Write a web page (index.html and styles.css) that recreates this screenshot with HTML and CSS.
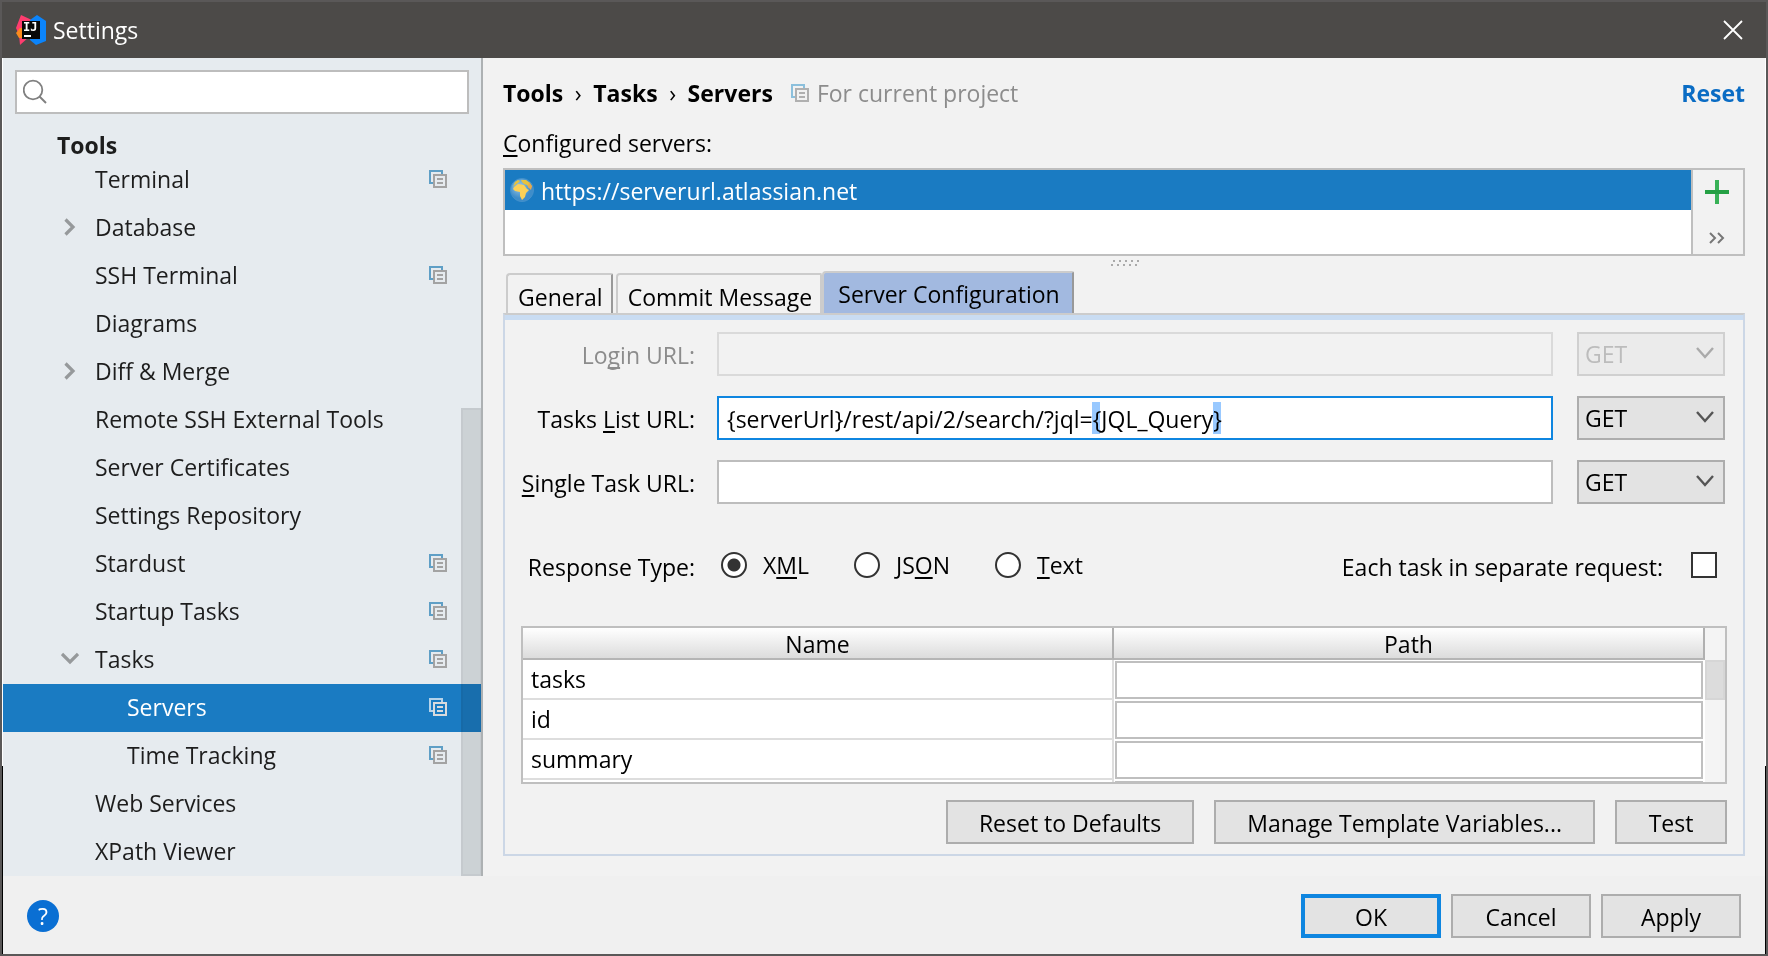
FILE: index.html
```html
<!DOCTYPE html>
<html lang="en">
<head>
<meta charset="utf-8">
<title>Settings</title>
<link rel="stylesheet" href="styles.css">
</head>
<body>
<svg class="defs" aria-hidden="true">
  <symbol id="project" viewBox="0 0 18 18">
    <path class="back" d="M13 4V1H1v12h3" fill="none" stroke-width="2"/>
    <path class="front" d="M5 5h12v12H5zM8 9h6M8 13h6" fill="none" stroke-width="2"/>
  </symbol>
  <symbol id="right" viewBox="0 0 18 18">
    <path d="M4.500 1.500L12 9L4.500 16.500" fill="none" stroke="#96999b" stroke-width="3.200"/>
  </symbol>
  <symbol id="down" viewBox="0 0 18 18">
    <path d="M1 4L9 12L17 4" fill="none" stroke="#96999b" stroke-width="3.200"/>
  </symbol>
  <symbol id="caret" viewBox="0 0 18 14">
    <path d="M1 2L9 11L17 2" fill="none" stroke="currentColor" stroke-width="2.400"/>
  </symbol>
</svg>
<div class="window">
  <header class="titlebar">
    <svg class="logo" viewBox="0 0 30 30" aria-hidden="true">
      <path d="M5 0L18 6L13 22L4 30L3 20L0 13z" fill="#fe3d6f"/>
      <path d="M0 18L4 13H7V23H3z" fill="#fb8b1e"/>
      <path d="M14 5L21 0L30 6V26L20 30L14 25z" fill="#0b84fb"/>
      <path d="M6 6h18v18H6z" fill="#080808"/>
      <text x="7" y="16" class="logo-text">IJ</text>
      <path d="M8 20h7v2H8z" fill="#fff"/>
    </svg>
    <h1>Settings</h1>
    <button class="close" aria-label="Close"><svg viewBox="0 0 20 20"><path d="M1 1L19 19M19 1L1 19" stroke="#fff" stroke-width="1.800"/></svg></button>
  </header>

  <div class="content">
    <aside class="sidebar">
      <label class="search">
        <svg viewBox="0 0 26 26" aria-hidden="true"><circle cx="10" cy="11" r="9.300" fill="none" stroke="#808080" stroke-width="1.800"/><path d="M16.500 17.500L23 24" stroke="#808080" stroke-width="2"/></svg>
        <input type="text" aria-label="Search settings">
      </label>
      <h2>Tools</h2>
      <nav class="tree">
        <a href="#">Terminal<svg class="scope"><use href="#project"/></svg></a>
        <a href="#"><svg class="arrow"><use href="#right"/></svg>Database</a>
        <a href="#">SSH Terminal<svg class="scope"><use href="#project"/></svg></a>
        <a href="#">Diagrams</a>
        <a href="#"><svg class="arrow"><use href="#right"/></svg>Diff &amp; Merge</a>
        <a href="#">Remote SSH External Tools</a>
        <a href="#">Server Certificates</a>
        <a href="#">Settings Repository</a>
        <a href="#">Stardust<svg class="scope"><use href="#project"/></svg></a>
        <a href="#">Startup Tasks<svg class="scope"><use href="#project"/></svg></a>
        <a href="#"><svg class="arrow"><use href="#down"/></svg>Tasks<svg class="scope"><use href="#project"/></svg></a>
        <a href="#" class="child selected">Servers<svg class="scope"><use href="#project"/></svg></a>
        <a href="#" class="child">Time Tracking<svg class="scope"><use href="#project"/></svg></a>
        <a href="#">Web Services</a>
        <a href="#">XPath Viewer</a>
        <span class="tree-thumb"></span>
      </nav>
    </aside>

    <main>
      <div class="crumbs">
        <b>Tools</b><span>›</span><b>Tasks</b><span>›</span><b>Servers</b>
        <svg class="scope"><use href="#project"/></svg>
        <em>For current project</em>
        <a href="#">Reset</a>
      </div>
      <p class="caption"><u>C</u>onfigured servers:</p>
      <div class="servers">
        <ul>
          <li>
            <svg viewBox="0 0 24 24" aria-hidden="true">
              <defs><radialGradient id="sea" cx=".4" cy=".35"><stop offset="0" stop-color="#9fcbe6"/><stop offset="1" stop-color="#3f8dc9"/></radialGradient></defs>
              <circle cx="12" cy="12" r="11.500" fill="url(#sea)" stroke="#4391cb"/>
              <path d="M5 4L8 2L10 3L8 5L5 7L3 9zM11 2L16 2L20 5L22 9L19 10L17 7L14 6L12 4z" fill="#e9c33c"/>
              <path d="M4 9L8 6L14 7L17 11L19 12L16 15L15 19L12 22L10 18L10 14L5 13L3 11z" fill="#fdd156"/>
              <path d="M19 4L22 8L21 12L18 9z" fill="#e8a94e"/>
            </svg>
            <span>https://serverurl.atlassian.net</span>
          </li>
        </ul>
        <div class="tools">
          <button aria-label="Add"><svg width="24" height="24" viewBox="0 0 24 24"><path d="M12 0V24" stroke="#38b157" stroke-width="4"/><path d="M0 12H24" stroke="#24a044" stroke-width="4"/></svg></button>
          <button aria-label="More"><svg width="16" height="12" viewBox="0 0 16 12"><path d="M1 1L6 6L1 11M9 1L14 6L9 11" fill="none" stroke="#777" stroke-width="2"/></svg></button>
        </div>
      </div>
      <div class="grip"><svg viewBox="0 0 30 8" aria-hidden="true"><path d="M4 1h26M2 5h26" stroke="#aaa" stroke-width="2" stroke-dasharray="2 4"/></svg></div>
      <div class="tabs" role="tablist">
        <button role="tab" class="tab-general">General</button>
        <button role="tab">Commit Message</button>
        <button role="tab" class="active" aria-selected="true">Server Configuration</button>
      </div>
      <section class="panel">
        <div class="form">
          <label class="off" for="login">Lo<u>g</u>in URL:</label>
          <input id="login" type="text" disabled>
          <div class="combo off"><select aria-label="Login method" disabled><option>GET</option></select><svg><use href="#caret"/></svg></div>
          <label for="list">Tasks <u>L</u>ist URL:</label>
          <input id="list" class="focused" type="text" value="{serverUrl}/rest/api/2/search/?jql={JQL_Query}">
          <div class="combo"><select aria-label="Tasks list method"><option>GET</option></select><svg><use href="#caret"/></svg></div>
          <label for="single"><u>S</u>ingle Task URL:</label>
          <input id="single" type="text">
          <div class="combo"><select aria-label="Single task method"><option>GET</option></select><svg><use href="#caret"/></svg></div>
        </div>
        <div class="response">
          <span class="response-label">Response Type:</span>
          <label><input type="radio" name="type" checked><span>X<u>M</u>L</span></label>
          <label><input type="radio" name="type"><span>JS<u>O</u>N</span></label>
          <label><input type="radio" name="type"><span><u>T</u>ext</span></label>
          <label class="separate"><span>Each task in separate request:</span><input type="checkbox"></label>
        </div>
        <div class="grid">
          <table>
            <thead><tr><th>Name</th><th>Path</th></tr></thead>
            <tbody>
              <tr><td>tasks</td><td><input type="text" aria-label="tasks path"></td></tr>
              <tr><td>id</td><td><input type="text" aria-label="id path"></td></tr>
              <tr><td>summary</td><td><input type="text" aria-label="summary path"></td></tr>
              <tr><td></td><td><input type="text" aria-label="path"></td></tr>
            </tbody>
          </table>
          <div class="track"><span></span></div>
        </div>
        <div class="actions">
          <button class="btn">Reset to Defaults</button>
          <button class="btn">Manage Template Variables...</button>
          <button class="btn test">Test</button>
        </div>
      </section>
    </main>
  </div>

  <footer>
    <button class="help" aria-label="Help">?</button>
    <button class="btn primary">OK</button>
    <button class="btn">Cancel</button>
    <button class="btn">Apply</button>
  </footer>
</div>
</body>
</html>
```
FILE: styles.css
```css
* { box-sizing: border-box; }
body {
  margin: 0;
  font: 23px/32px "Open Sans", "Noto Sans", sans-serif;
  color: #000;
}
button, input, select { font: inherit; color: inherit; margin: 0; border-radius: 0; }
button { padding: 0; border: 0; background: none; }
h1, h2, p, ul { margin: 0; padding: 0; font: inherit; list-style: none; }
a { color: inherit; text-decoration: none; }
u { text-decoration-thickness: 2px; text-underline-offset: 3px; text-decoration-skip-ink: none; }
svg { flex: none; display: block; }
.defs { position: absolute; width: 0; height: 0; }

.window {
  position: relative;
  display: flex;
  flex-direction: column;
  height: 100vh;
  min-height: 900px;
  border: 2px solid #5a5858;
  background: #f0f0f0;
}
/* inner edge: white above, black along the lower part of the frame */
.window::after {
  content: "";
  position: absolute;
  inset: 56px 0 0;
  border: solid;
  border-width: 0 1px;
  border-image: linear-gradient(#fff 79%, #000 79%) 1;
  pointer-events: none;
}
.titlebar {
  display: flex;
  align-items: center;
  height: 56px;
  padding: 0 23px 0 14px;
  background: #4c4a48;
  color: #fff;
}
.titlebar h1 { flex: 1; margin-left: 7px; }
.logo { width: 30px; height: 30px; }
.logo-text { font: bold 12px "DejaVu Sans Mono", monospace; fill: #fff; }
.close svg { width: 20px; height: 20px; }

.content { display: flex; flex: 1; min-height: 0; padding-left: 1px; }
.sidebar {
  display: flex;
  flex-direction: column;
  width: 480px;
  flex: none;
  border-right: 2px solid #adb1b3;
  background: #e6ebef;
  color: #1d1d1d;
}
.search {
  display: flex;
  align-items: center;
  height: 44px;
  margin: 12px 12px 0;
  padding: 0 6px;
  flex: none;
  border: 2px solid #bdbdbd;
  background: #fff;
}
.search svg { width: 26px; height: 26px; }
.search input { flex: 1; min-width: 0; border: 0; outline: 0; background: none; }
.sidebar h2 { margin: 15px 0 -5px 54px; font-weight: bold; }
.tree { position: relative; flex: 1; min-height: 0; overflow: hidden; }
.tree a { display: flex; align-items: center; height: 48px; padding: 0 34px 2px 92px; }
.tree a.child { padding-left: 124px; }
.tree .scope { margin-left: auto; }
.scope { --back: #5f9fc6; --front: #a3a3a3; width: 18px; height: 18px; }
.back { stroke: var(--back); }
.front { stroke: var(--front); }
.arrow { width: 18px; height: 18px; margin: 0 16px 0 -34px; }
.tree .selected { background: #1a7bc2; color: #fff; }
.selected .scope { --back: #b5d3ea; --front: #d8dadd; }
.tree-thumb {
  position: absolute;
  top: 35%;
  right: 0;
  bottom: 0;
  width: 20px;
  border: 2px solid #dbdcdc;
  border-right-width: 1px;
  background: #e3e4e4;
  mix-blend-mode: multiply;
}

main { display: flex; flex-direction: column; flex: 1; min-width: 0; padding: 19px 21px 20px 20px; background: #f2f2f2; }
.crumbs { display: flex; align-items: center; }
.crumbs span { width: 30px; text-align: center; }
.crumbs .scope { --back: #8cc0dc; --front: #b0b0b0; margin: 0 8px 0 18px; }
.crumbs em { font-style: normal; color: #8c8c8c; }
.crumbs a { margin-left: auto; font-weight: bold; color: #0a6cc4; }
.caption { margin: 18px 0 9px; }
.servers { display: flex; height: 88px; flex: none; border: 2px solid #bfbfbf; }
.servers ul { flex: 1; background: #fff; }
.servers li { display: flex; align-items: center; gap: 7px; height: 40px; padding-left: 5px; background: #1a7bc2; color: #fff; }
.servers li svg { width: 24px; height: 24px; }
.servers li span { padding-top: 2px; }
.tools { display: flex; flex-direction: column; align-items: center; justify-content: space-between; width: 52px; padding: 10px 2px 10px 0; border-left: 2px solid #bfbfbf; }
.grip { display: flex; align-items: center; justify-content: center; height: 15px; flex: none; }
.grip svg { width: 30px; height: 8px; }

.tabs { display: flex; align-items: flex-end; height: 42px; flex: none; padding-left: 3px; }
.tabs button { height: 40px; padding: 7px 8px 0 10px; border: 2px solid #ccc; border-bottom: 0; border-radius: 4px 2px 0 0; line-height: 31px; }
.tabs .tab-general { margin-right: 3px; border-right-color: #999; }
.tabs .active { height: 42px; padding: 2px 12px 0 14px; background: #a2b9e0; border-right-color: #999; }
.panel {
  display: flex;
  flex-direction: column;
  flex: 1;
  min-height: 0;
  padding: 17px 16px 10px;
  border: 2px solid #ccd7e6;
  border-top-color: #ccc;
  background: linear-gradient(#c9dcf2, #c9dcf2) top / 100% 5px no-repeat;
}
.form { display: grid; grid-template-columns: 196px 1fr 172px; row-gap: 20px; padding-right: 2px; align-items: center; }
.form label { padding: 2px 22px 0 0; text-align: right; white-space: nowrap; }
.form input { height: 44px; min-width: 0; width: 100%; padding: 2px 8px 0; border: 2px solid #bdbdbd; background: #fff; outline: 0; }
.form input:disabled { border-color: #dadada; background: #f2f2f2; }
.form .focused {
  border-color: #0f86e0;
  background: linear-gradient(#99c9ff, #99c9ff) 373px 4px / 8px 32px no-repeat,
    linear-gradient(#99c9ff, #99c9ff) 494px 4px / 8px 32px no-repeat, #fff;
}
.form label.off { color: #8c8c8c; }
.combo { position: relative; height: 44px; margin-left: 24px; }
.combo select { width: 100%; height: 100%; padding: 0 6px; border: 2px solid #adadad; background: #e3e3e3; appearance: none; opacity: 1; }
.combo svg { position: absolute; top: 14px; right: 11px; width: 18px; height: 14px; color: #555; pointer-events: none; }
.combo.off select { color: #bcbcbc; border-color: #d0d0d0; background: #ebebeb; }
.combo.off svg { color: #aaa; }

.response { display: flex; align-items: center; height: 44px; margin: 39px 0; padding-right: 10px; }
.response-label { width: 174px; margin-right: 26px; padding-top: 4px; text-align: right; }
.response label { display: flex; align-items: center; gap: 16px; margin-right: 45px; }
.response .separate { margin: 0 0 0 auto; gap: 28px; }
.response .separate span { padding-top: 4px; }
.response input { appearance: none; width: 26px; height: 26px; border: 2px solid #333; background: #fff; }
.response [type="radio"] { border-radius: 50%; }
.response [type="radio"]:checked { background: radial-gradient(circle, #333 6px, #fff 7px); }

.grid { display: flex; flex: 1; min-height: 0; overflow: hidden; border: 2px solid #bfbfbf; }
.grid table { flex: 1; width: 100%; align-self: flex-start; table-layout: fixed; border-collapse: separate; border-spacing: 0; background: #fff; }
.grid th { width: 50%; height: 32px; padding: 3px 0 0; font-weight: normal; line-height: 27px; border-right: 2px solid #b0b0b0; border-bottom: 2px solid #b5b5b5; background: linear-gradient(#fff, #dcdcdc); }
.grid td { height: 40px; padding: 0 8px; line-height: 38px; border-right: 2px solid #ddd; border-bottom: 2px solid #ddd; }
.grid td + td { padding: 0 2px 0 1px; border: 0; line-height: 0; }
.grid td input { width: 100%; height: 38px; border: 2px solid #bfbfbf; background: #fff; outline: 0; }
.track { flex: none; width: 20px; padding-top: 32px; background: #f4f4f4; }
.track span { display: block; height: 40px; border: 2px solid #d6d6d6; background: #dcdcdc; }

.actions { display: flex; justify-content: flex-end; gap: 20px; margin-top: 16px; }
.btn { height: 44px; padding: 2px 31px 0; border: 2px solid #adadad; background: #e3e3e3; white-space: nowrap; }
.btn.test { width: 112px; }
footer { display: flex; align-items: center; gap: 10px; flex: none; padding: 18px 25px 16px; }
footer .btn { width: 140px; padding: 2px 0 0; }
footer .primary { border: 4px solid #0f86e0; }
.help { width: 32px; height: 32px; margin-right: auto; border-radius: 50%; background: #0a6fd3; color: #fff; line-height: 32px; }
```
